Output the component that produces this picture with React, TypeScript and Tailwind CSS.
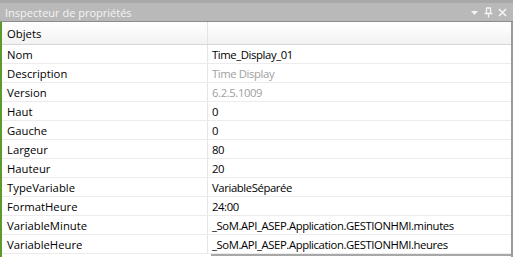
import React from "react";

const rows: { name: string; value: string; muted?: boolean }[] = [
  { name: "Nom", value: "Time_Display_01" },
  { name: "Description", value: "Time Display", muted: true },
  { name: "Version", value: "6.2.5.1009", muted: true },
  { name: "Haut", value: "0" },
  { name: "Gauche", value: "0" },
  { name: "Largeur", value: "80" },
  { name: "Hauteur", value: "20" },
  { name: "TypeVariable", value: "VariableSéparée" },
  { name: "FormatHeure", value: "24:00" },
  { name: "VariableMinute", value: "_SoM.API_ASEP.Application.GESTIONHMI.minutes" },
  { name: "VariableHeure", value: "_SoM.API_ASEP.Application.GESTIONHMI.heures" },
];

export default function App() {
  return (
    <div
      className="w-[513px] h-[257px] overflow-hidden bg-white flex flex-col text-[11.3px] text-black"
      style={{ fontFamily: "'Open Sans', 'Noto Sans', sans-serif" }}
    >
      {/* title bar */}
      <div className="h-[22px] shrink-0 bg-[#b9b9b9] border-t-[3px] border-[#a9a9a9] border-b border-b-[#8c8c8c] flex items-center pl-[5px] pr-[6px]">
        <span className="text-[#f4f4f4] text-[11px] leading-none flex-1 pt-[1px]">
          Inspecteur de propriétés
        </span>
        <div className="flex items-center gap-[5px] text-[#f4f4f4]">
          <svg width="9" height="9" viewBox="0 0 9 9">
            <path d="M1 3h7L4.5 7z" fill="currentColor" />
          </svg>
          <svg width="9" height="11" viewBox="0 0 9 11">
            <path d="M2 1h5M2.5 1v5M6.5 1v5M0.5 6.5h8M4.5 6.5v4" stroke="currentColor" strokeWidth="1.3" fill="none" />
          </svg>
          <svg width="9" height="9" viewBox="0 0 9 9">
            <path d="M1 1l7 7M8 1l-7 7" stroke="currentColor" strokeWidth="1.6" />
          </svg>
        </div>
      </div>

      <div className="flex-1 flex border-l-2 border-l-[#5c9a2c] border-r-2 border-r-[#9a9a9a]">
        <div className="flex-1 flex flex-col">
          {/* header */}
          <div className="h-[23px] shrink-0 flex bg-gradient-to-b from-white via-[#f9f9f9] to-[#f2f2f2] border-b border-[#d6d6d6]">
            <div className="w-[206px] border-r border-[#e4e4e4] pl-[5px] pt-[2px] flex items-center">Objets</div>
            <div className="flex-1" />
          </div>
          {rows.map((r) => (
            <div key={r.name} className="h-[19px] shrink-0 flex border-b border-[#ececec]">
              <div className="w-[206px] border-r border-[#e4e4e4] pl-[5px] pt-[3px] flex items-center whitespace-nowrap">
                {r.name}
              </div>
              <div
                className={`flex-1 pl-[4px] pt-[3px] flex items-center whitespace-nowrap tracking-[-0.4px] ${r.muted ? "text-[#a0a0a0]" : ""}`}
              >
                {r.value}
              </div>
            </div>
          ))}
          <div className="flex-1 flex">
            <div className="w-[209px]" />
            <div className="flex-1 border-t-2 border-[#a8a8a8]" />
          </div>
        </div>
      </div>
    </div>
  );
}
